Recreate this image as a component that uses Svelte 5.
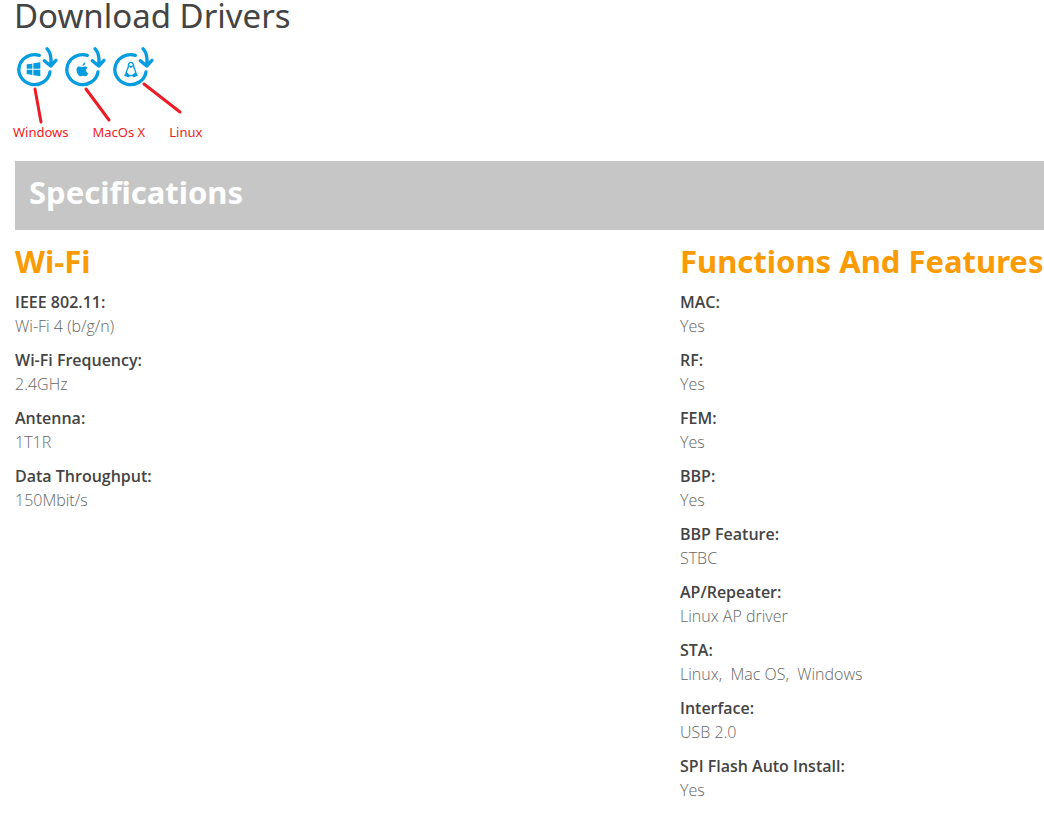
<script lang="ts">
    type Spec = { label: string; value: string };

    const systems = ['Windows', 'MacOs X', 'Linux'];

    const wifi: Spec[] = [
        { label: 'IEEE 802.11', value: 'Wi-Fi 4 (b/g/n)' },
        { label: 'Wi-Fi Frequency', value: '2.4GHz' },
        { label: 'Antenna', value: '1T1R' },
        { label: 'Data Throughput', value: '150Mbit/s' },
    ];

    const features: Spec[] = [
        { label: 'MAC', value: 'Yes' },
        { label: 'RF', value: 'Yes' },
        { label: 'FEM', value: 'Yes' },
        { label: 'BBP', value: 'Yes' },
        { label: 'BBP Feature', value: 'STBC' },
        { label: 'AP/Repeater', value: 'Linux AP driver' },
        { label: 'STA', value: 'Linux,\u00a0 Mac OS,\u00a0 Windows' },
        { label: 'Interface', value: 'USB 2.0' },
        { label: 'SPI Flash Auto Install', value: 'Yes' },
    ];

    const groups = [
        { title: 'Wi-Fi', specs: wifi },
        { title: 'Functions And Features', specs: features },
    ];
</script>

<main>
    <section class="drivers">
        <h1>Download Drivers</h1>
        <nav class="icons">
            {#each systems as system}
                <a href="#download" aria-label="Download driver for {system}">
                    <svg viewBox="15 18 144 126" width="48" height="42">
                        <g fill="none" stroke="#069de0" stroke-width="10" stroke-linecap="round" stroke-linejoin="round">
                            <path d="M88 46A47 45 0 1 0 120 96" />
                            <path d="M111 26Q127 43 122 76M103 62L122 78L138 61" />
                        </g>
                        {#if system === 'Windows'}
                            <path
                                fill="#069de0"
                                d="M50 73L67 71V86H50ZM70 70L91 67V86H70ZM50 89H67V105L50 102ZM70 89H91V109L70 106Z"
                            />
                        {:else if system === 'MacOs X'}
                            <path
                                fill="#069de0"
                                d="M82 67Q83 75 74 78Q73 70 82 67ZM73 81C77 81 83 76 89 83C82 87 83 96 91 100C88 106 85 110 81 109C76 107 74 107 69 109C61 110 52 92 57 83C62 76 68 81 73 81Z"
                            />
                        {:else}
                            <g fill="none" stroke="#069de0" stroke-width="4" stroke-linecap="round" stroke-linejoin="round">
                                <path d="M67 80C65 63 84 63 83 80C84 87 91 93 89 102M67 80C66 87 59 93 61 102" />
                                <path d="M71 78L75 82L79 78M70 107H80" />
                                <path fill="#069de0" d="M61 99L57 106L67 110L70 106ZM89 99L93 106L83 110L80 106Z" />
                            </g>
                        {/if}
                    </svg>
                </a>
            {/each}
        </nav>
        <svg class="pointers" viewBox="0 0 200 44" width="200" height="44" aria-hidden="true">
            <path d="M35 9L41 42M86 9L109 40M144 4L180 32" />
        </svg>
        <div class="captions">
            {#each systems as system}
                <span>{system}</span>
            {/each}
        </div>
    </section>

    <section class="specs">
        <h2>Specifications</h2>
        <div class="columns">
            {#each groups as group}
                <div>
                    <h3>{group.title}</h3>
                    <dl>
                        {#each group.specs as spec}
                            <dt>{spec.label}:</dt>
                            <dd>{spec.value}</dd>
                        {/each}
                    </dl>
                </div>
            {/each}
        </div>
    </section>
</main>

<style>
    :global(body) {
        margin: 0;
        background: #fff;
    }

    main {
        font-family: 'Noto Sans', 'Open Sans', sans-serif;
        font-size: 16px;
        line-height: 24px;
        color: #444;
    }

    h1,
    h2,
    h3,
    dl,
    dd {
        margin: 0;
    }

    h1 {
        padding: 0 14px;
        font-size: 33px;
        font-weight: 400;
        line-height: 32px;
    }

    .icons {
        display: flex;
        padding: 14px 15px 0;
    }

    .icons a,
    .icons svg {
        display: block;
    }

    .pointers {
        display: block;
        margin-top: -8px;
        fill: none;
        stroke: #ed1c24;
        stroke-width: 3;
        stroke-linecap: round;
    }

    .captions {
        display: flex;
        gap: 24px;
        padding: 0 13px;
        font-size: 13px;
        line-height: 16px;
        color: #ed1c24;
    }

    .specs {
        padding: 21px 0 0 15px;
    }

    h2 {
        padding: 11px 14px 18px;
        background: #c6c6c6;
        color: #fff;
        font-size: 31px;
        line-height: 40px;
    }

    .columns {
        display: grid;
        grid-template-columns: 1fr 364px;
        padding-top: 11px;
    }

    h3 {
        margin-bottom: 9px;
        color: #fb9b04;
        font-size: 31px;
        line-height: 40px;
        white-space: nowrap;
    }

    dt {
        font-family: 'Open Sans', sans-serif;
        font-weight: 600;
    }

    dd {
        margin-bottom: 10px;
        font-family: 'Open Sans', sans-serif;
        font-weight: 300;
        color: #666;
    }
</style>
